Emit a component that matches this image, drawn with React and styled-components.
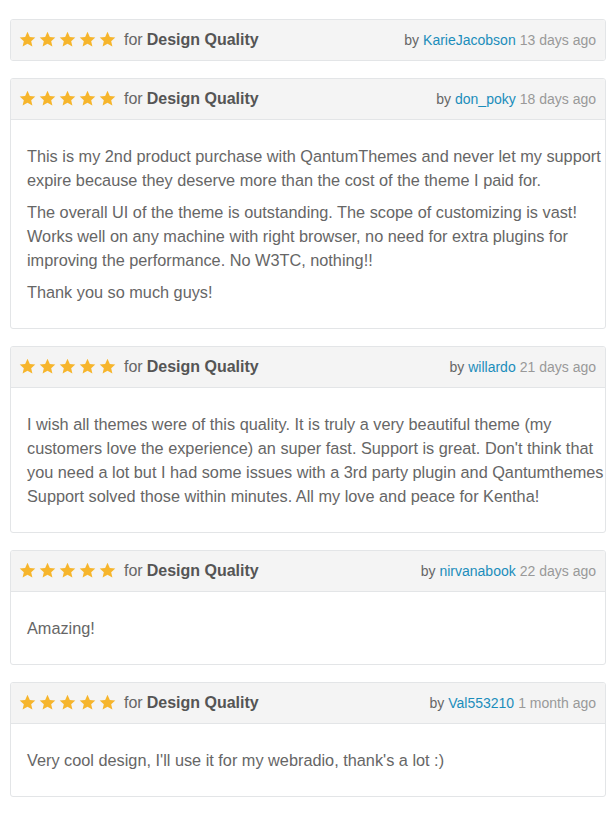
import React from "react";
import styled, { createGlobalStyle } from "styled-components";

const Global = createGlobalStyle`
  html, body {
    margin: 0;
    padding: 0;
    background: #fff;
  }
  body {
    font-family: "Liberation Sans", Arial, Helvetica, sans-serif;
    -webkit-font-smoothing: antialiased;
  }
`;

const reviews = [
  { user: "KarieJacobson", when: "13 days ago", body: null },
  {
    user: "don_poky",
    when: "18 days ago",
    body: [
      [
        "This is my 2nd product purchase with QantumThemes and never let my support",
        "expire because they deserve more than the cost of the theme I paid for.",
      ],
      [
        "The overall UI of the theme is outstanding. The scope of customizing is vast!",
        "Works well on any machine with right browser, no need for extra plugins for",
        "improving the performance. No W3TC, nothing!!",
      ],
      ["Thank you so much guys!"],
    ],
  },
  {
    user: "willardo",
    when: "21 days ago",
    body: [
      [
        "I wish all themes were of this quality. It is truly a very beautiful theme (my",
        "customers love the experience) an super fast. Support is great. Don't think that",
        "you need a lot but I had some issues with a 3rd party plugin and Qantumthemes",
        "Support solved those within minutes. All my love and peace for Kentha!",
      ],
    ],
  },
  { user: "nirvanabook", when: "22 days ago", body: [["Amazing!"]] },
  {
    user: "Val553210",
    when: "1 month ago",
    body: [["Very cool design, I'll use it for my webradio, thank's a lot :)"]],
  },
];

const List = styled.div`
  padding: 19px 10px 0;
  width: 596px;
`;

const Card = styled.div`
  border: 1px solid #e3e5e7;
  border-radius: 3px;
  background: #fff;
  margin-bottom: 17px;
  overflow: hidden;
`;

const Header = styled.div`
  display: flex;
  align-items: center;
  justify-content: space-between;
  height: 40px;
  padding: 0 9px 0 8px;
  background: #f4f4f4;
  border-bottom: ${({ $open }) => ($open ? "1px solid #e3e5e7" : "none")};
`;

const Rating = styled.div`
  display: flex;
  align-items: center;
  font-size: 16px;
  color: #666;
`;

const Stars = styled.span`
  display: inline-flex;
  gap: 3px;
  margin-right: 8px;
  margin-top: -1px;
`;

const Strong = styled.b`
  color: #555;
  font-weight: 700;
  margin-left: 4px;
`;

const Meta = styled.div`
  font-size: 14px;
  color: #666;
  white-space: nowrap;
`;

const User = styled.a`
  color: #1b8dbb;
  text-decoration: none;
  margin: 0 4px;
`;

const When = styled.span`
  color: #999;
`;

const Body = styled.div`
  padding: 16px 8px 16px 16px;
  overflow: hidden;
`;

const Para = styled.p`
  margin: 8px 0;
  font-size: 16.3px;
  line-height: 24px;
  color: #666;
  white-space: nowrap;
`;

const Star = () => (
  <svg width="17" height="17" viewBox="0 0 24 24">
    <path
      fill="#f6b52c"
      d="M12 1.2l3.3 7.1 7.7.8-5.8 5.2 1.7 7.7L12 18l-6.9 4 1.7-7.7L1 9.1l7.7-.8z"
    />
  </svg>
);

export default function App() {
  return (
    <>
      <Global />
      <List>
        {reviews.map((r) => (
          <Card key={r.user}>
            <Header $open={!!r.body}>
              <Rating>
                <Stars>
                  {[0, 1, 2, 3, 4].map((i) => (
                    <Star key={i} />
                  ))}
                </Stars>
                for<Strong>Design Quality</Strong>
              </Rating>
              <Meta>
                by<User href="#">{r.user}</User>
                <When>{r.when}</When>
              </Meta>
            </Header>
            {r.body && (
              <Body>
                {r.body.map((lines, i) => (
                  <Para key={i}>
                    {lines.map((l, j) => (
                      <React.Fragment key={j}>
                        {j > 0 && <br />}
                        {l}
                      </React.Fragment>
                    ))}
                  </Para>
                ))}
              </Body>
            )}
          </Card>
        ))}
      </List>
    </>
  );
}
